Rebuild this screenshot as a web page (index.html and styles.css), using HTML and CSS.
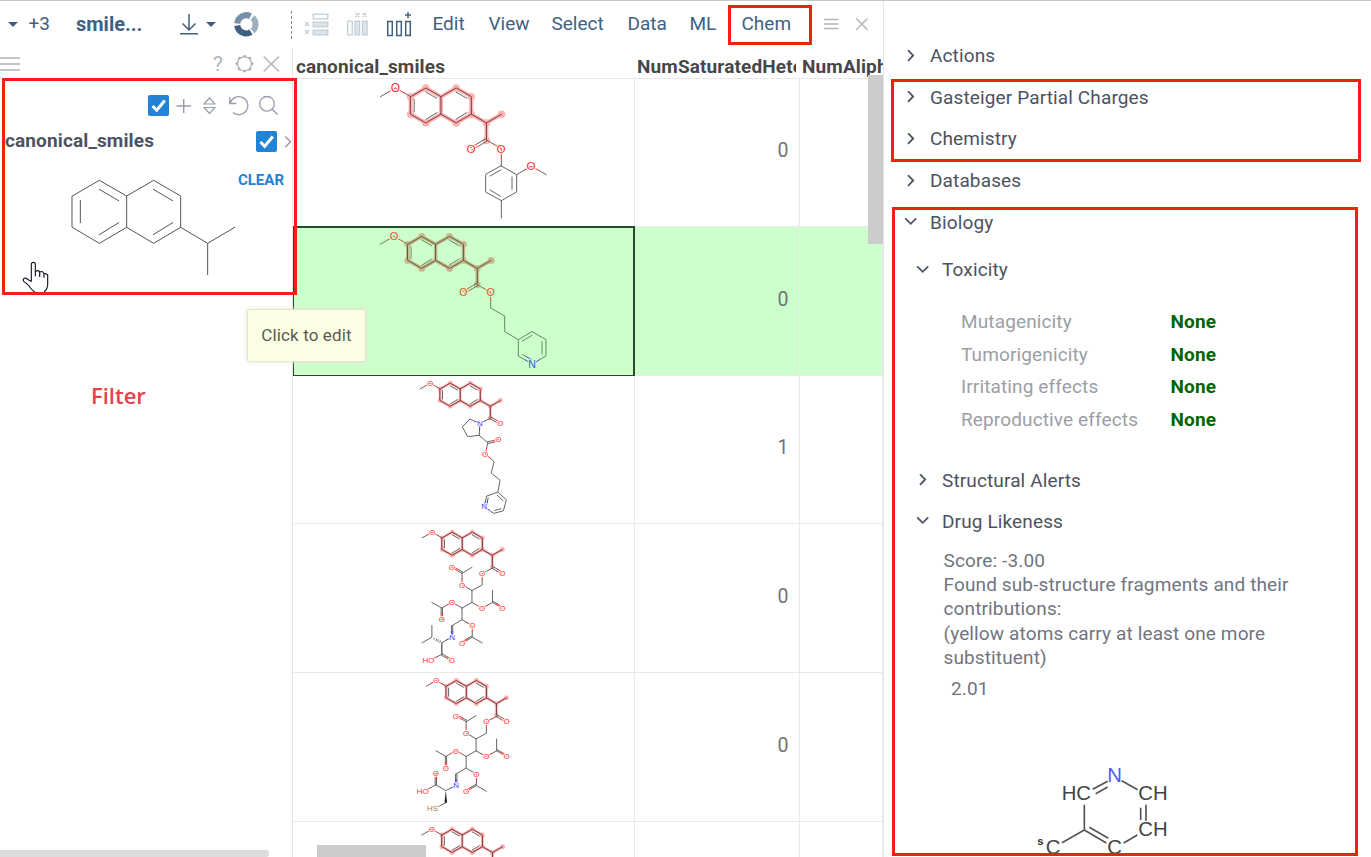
FILE: index.html
```html
<!DOCTYPE html>
<html lang="en">
<head>
<meta charset="utf-8">
<title>smiles</title>
<link rel="stylesheet" href="styles.css">
</head>
<body>
<svg class="defs" width="0" height="0" aria-hidden="true">
  <defs>
    <!-- naproxen skeleton, origin at the methoxy-bearing ring atom -->
    <g id="naproxen">
      <path class="hl" d="M0 0L30.3-17.5L60.6 0V35L30.3 52.5L0 35ZM60.6 0L91-17.5L121.3 0V35L91 52.5L60.6 35M121.3 35L151.5 52.5L181.8 35M151.5 52.5V87.5"/>
      <path class="dots" d="M0 0h0M30.3-17.5h0M0 35h0M30.3 52.5h0M91-17.5h0M121.3 0h0M91 52.5h0M181.8 35h0M151.5 87.5h0M151.5 52.5h0M121.3 35h0"/>
      <path class="b dark" d="M0 0L30.3-17.5L60.6 0V35L30.3 52.5L0 35ZM60.6 0L91-17.5L121.3 0V35L91 52.5L60.6 35M121.3 35L151.5 52.5L181.8 35M151.5 52.5V87.5"/>
      <path class="b" d="M7 6V30M31-9L52 3M31 45L53 32M91-9L112 3M91 45L112 32M-60.6 0L-45-9M0 0L-12-7"/>
      <path class="b o" d="M-45-9L-30.3-17.5L-12-7"/>
      <text class="t o" x="-30.3" y="-9.500">O</text>
    </g>
    <!-- acetylated sugar chain ending at the imine nitrogen -->
    <g id="sugar">
      <path class="b" d="M153 90L141 97M151 92L165 100M154 87L168 95M121 124V142L90 159M90 159L75 150M60 124V107M90 89L60 107M60 107L48 100M62 103L50 96M90 159V195M90 195L106 204M136 204L152 195M152 159V195M152 195L166 203M154 192L168 200M90 195L60 212M60 212L45 203M14 203L-1 212M-31 195L-1 212M-3 212V230M1 212V230M60 212V247L30 265M60 247L75 256M91 283V300L121 317M91 300L77 308M89 297L75 305M28 265V283M32 265V283"/>
      <path class="b o" d="M141 97L121 107V124M165 100L180 109M168 95L183 104M75 150L60 142V124M48 100L29 89M50 96L31 85M106 204L121 212L136 204M166 203L181 212M168 200L183 209M45 203L29 195L14 203M-3 230V247M1 230V247M75 256L91 265V283M77 308L61 317M75 305L59 314"/>
      <path class="b n" d="M28 283V300M32 283V300"/>
      <g class="t o"><text x="121" y="115.500">O</text><text x="182" y="115.500">O</text><text x="60" y="150">O</text><text x="29" y="98">O</text><text x="121" y="220.500">O</text><text x="182" y="220.500">O</text><text x="29" y="203.500">O</text><text x="-1" y="255.500">O</text><text x="91" y="273.500">O</text><text x="60" y="325.500">O</text></g>
      <text class="t n" x="30" y="308">N</text>
    </g>
    <g id="check">
      <rect width="21" height="21" rx="2" fill="#2083d5"/>
      <path d="M4.5 11L8.7 15.2L16.8 5.5" fill="none" stroke="#fff" stroke-width="3"/>
    </g>
  </defs>
</svg>

<main class="app">
  <section class="work">
    <header class="toolbar">
      <svg class="ic" width="21" height="10" viewBox="0 0 21 10"><path d="M8 2h10l-5 5z" fill="#41607f"/></svg>
      <span>+3</span>
      <b>smile...</b>
      <svg class="ic" width="18" height="24" viewBox="0 0 18 24"><path d="M9 1v16M2.500 10.500L9 17L15.500 10.500M0 20.700h18" fill="none" stroke="#41607f" stroke-width="1.500"/></svg>
      <svg class="ic" width="11" height="10" viewBox="0 0 11 10"><path d="M0 2h10l-5 5z" fill="#41607f"/></svg>
      <svg class="ic" width="25" height="26" viewBox="0 0 25 26"><g fill="none" stroke-width="6"><path d="M3.200 11.500A9.200 9.200 0 0 1 16.500 4.200" stroke="#7690aa"/><path d="M18.600 5.500A9.200 9.200 0 0 1 18.600 19" stroke="#9dafc1"/><path d="M3.200 13.500A9.200 9.200 0 0 0 17 20.100" stroke="#3f607f"/></g></svg>
      <i class="dash"></i>
      <svg class="ic" width="26" height="26" viewBox="0 0 26 26"><g fill="none" stroke="#c4ced7" stroke-width="1.300"><path d="M1 10l4 4m0-4l-4 4M1 18l4 4m0-4l-4 4"/><rect x="9.200" y="2.200" width="14.600" height="4.600"/><rect x="9.200" y="10.200" width="14.600" height="4.600" fill="#dfe4e9"/><rect x="9.200" y="18.200" width="14.600" height="4.600" fill="#dfe4e9"/></g></svg>
      <svg class="ic" width="22" height="26" viewBox="0 0 22 26"><g fill="none" stroke="#c4ced7" stroke-width="1.300"><path d="M8.500 1l4 4m0-4l-4 4M15.500 1l4 4m0-4l-4 4"/><rect x=".7" y="9.200" width="4.600" height="13.600"/><rect x="8" y="9.200" width="4.600" height="13.600" fill="#dfe4e9"/><rect x="15.500" y="9.200" width="4.600" height="13.600" fill="#dfe4e9"/></g></svg>
      <svg class="ic" width="27" height="26" viewBox="0 0 27 26"><g fill="none" stroke="#41607f" stroke-width="1.500"><path d="M19 3h6M22 0v6"/><rect x="1.700" y="9.500" width="4.600" height="14"/><rect x="10.700" y="9.500" width="4.600" height="14"/><rect x="19.700" y="9.500" width="4.600" height="14"/></g></svg>
      <span>Edit</span><span>View</span><span>Select</span><span>Data</span><span>ML</span><span>Chem</span>
      <svg class="ic" width="15" height="14" viewBox="0 0 15 14"><path d="M0 1.500h14.500M0 6h14.500M0 10.500h14.500" stroke="#b4b4b4" stroke-width="1.500"/></svg>
      <svg class="ic" width="13" height="14" viewBox="0 0 13 14"><path d="M.2.500L11.500 11.800M11.500.5L.2 11.800" stroke="#b4b4b4" stroke-width="1.500"/></svg>
    </header>

    <div class="columns">
      <aside class="side">
        <div class="side-head">
          <svg width="20" height="16" viewBox="0 0 20 16"><path d="M0 2h20M0 8h20M0 14h20" stroke="#b2b4bb" stroke-width="1.700"/></svg>
          <span>?</span>
          <svg width="20" height="20" viewBox="0 0 20 20"><path d="M9.500 1L12 3.500L15.600 3.300L15.800 6.900L18.300 9.700L15.800 12.500L15.600 16.100L12 16L9.500 18.500L7 16L3.400 16.100L3.200 12.500L.7 9.700L3.200 6.900L3.400 3.300L7 3.500Z" fill="#b2b4bb" stroke="#b2b4bb" stroke-linejoin="round"/><circle cx="9.500" cy="9.800" r="6.300" fill="#fff"/></svg>
          <svg width="17" height="18" viewBox="0 0 17 18"><path d="M.7 1.500L16 16.500M16 1.500L.7 16.500" stroke="#b2b4bb" stroke-width="1.500"/></svg>
        </div>
        <div class="tools">
          <svg width="21" height="21"><use href="#check"/></svg>
          <svg width="16" height="21" viewBox="0 0 16 21"><path d="M.5 11h14.500M7.700 4v14" stroke="#989da8" stroke-width="1.500"/></svg>
          <svg width="13" height="21" viewBox="0 0 13 21"><path d="M1 9L6.500 3L12 9ZM1 12.500h11L6.500 18.500Z" fill="none" stroke="#989da8" stroke-width="1.200"/></svg>
          <svg width="20" height="21" viewBox="0 0 20 21"><path d="M.8 2v6.500h6.500M1.200 8A9 9 0 1 1 4 17.500" fill="none" stroke="#989da8" stroke-width="1.300"/></svg>
          <svg width="20" height="21" viewBox="0 0 20 21"><path d="M13.300 14.200L18.500 19.500" stroke="#989da8" stroke-width="1.500"/><circle cx="8" cy="8.800" r="7.300" fill="none" stroke="#989da8" stroke-width="1.300"/></svg>
        </div>
        <div class="field">
          <b>canonical_smiles</b>
          <svg width="21" height="21"><use href="#check"/></svg>
          <svg width="7" height="13" viewBox="0 0 7 13"><path d="M.3 1.500L5.500 6.700L.3 12" fill="none" stroke="#989da8" stroke-width="1.500"/></svg>
        </div>
        <div class="sketch">
          <span class="clear">CLEAR</span>
          <svg width="292" height="132" viewBox="0 264 876 396">
            <path class="b" d="M217 363L298 316L380 363V457L298 505L217 457ZM380 363L461 316L542 363V457L461 505L380 457M542 457L623 505L704 457M623 505V599M241 376V443M298 343L356 377M298 479L356 443M460 343L518 377M460 479L518 443"/>
            <path class="hand" d="M94 619V568Q94 562 100 562Q106 562 106 568V592Q108 586 114 587Q119 588 119 593Q121 588 127 590Q132 592 132 597Q137 594 143 600V626Q143 642 134 648V654H108Q92 642 87 632L71 619Q68 613 73 610Q78 608 86 615ZM106 590V604M119 592V606M132 596V608"/>
          </svg>
        </div>
        <p class="note">Filter</p>
        <i class="side-scroll"></i>
      </aside>

      <section class="table">
        <div class="row head"><b>canonical_smiles</b><b>NumSaturatedHeterocycles</b><b>NumAliph</b></div>
        <div class="row">
          <div><svg class="mol" viewBox="-201 12 1023 441">
            <use href="#naproxen" transform="translate(152 65) scale(1.5)"/>
            <path class="b" d="M379 195L402 208M376 192L354 205M380 199L358 212M424 273V248M424 273L470 299V351L424 377L377 351V299ZM390 303L422 285M456 306V343M422 364L390 345M470 299L492 286M559 299L536 286M424 377V429"/>
            <path class="b o" d="M402 208L424 221V248M354 205L331 218M358 212L335 225M492 286L513 274L536 286"/>
            <g class="t o big"><text x="333" y="233">O</text><text x="423" y="233">O</text><text x="513" y="286">O</text></g>
          </svg></div><div>0</div><div></div>
        </div>
        <div class="row current">
          <div><svg class="mol" viewBox="-201 15 1023 444">
            <use href="#naproxen" transform="translate(143.500 67) scale(1.375)"/>
            <path class="b" d="M351 188L371 199M349 185L330 196M353 191L334 202M392 235V258L434 282V329L475 353L516 329L558 353V402L537 414M475 353V402L496 414M487 357L516 340M546 359V396M488 398L501 405"/>
            <path class="b o" d="M371 199L392 211V235M330 196L309 208M334 202L313 214"/>
            <path class="b n" d="M537 414L517 426L496 414M501 405L514 413"/>
            <g class="t o mid"><text x="310" y="222">O</text><text x="392" y="222">O</text></g><text class="t n mid" x="516" y="437">N</text>
          </svg></div><div>0</div><div></div>
        </div>
        <div class="row">
          <div><svg class="mol" viewBox="-321 3 1023 444">
            <use href="#naproxen" transform="translate(120 42)"/>
            <path class="b" d="M271 131L255 139M270 132L285 140M273 127L288 135M225 140L210 133L187 157L203 186L238 182L239 165M238 182L264 205L260 222M263 202L280 198M265 207L281 203M270 250L283 262L274 296L301 318L294 354L260 366L257 381M294 354L320 377L311 410L282 418L268 408M292 363L310 379M304 404L285 409M265 371L263 381"/>
            <path class="b n" d="M255 139L240 147L225 140M240 147L239 165M257 381L253 397L268 408M263 381L261 392"/>
            <path class="b o" d="M285 140L301 149M288 135L304 144M260 222L256 239L270 250M280 198L296 194M281 203L297 199"/>
            <g class="t o"><text x="302" y="155.500">O</text><text x="296" y="203.500">O</text><text x="256" y="247.500">O</text></g><g class="t n"><text x="240" y="155.500">N</text><text x="253" y="406">N</text></g>
          </svg></div><div>1</div><div></div>
        </div>
        <div class="row">
          <div><svg class="mol" viewBox="-321 3 1023 447">
            <use href="#naproxen" transform="translate(126 45)"/><use href="#sugar" transform="translate(126 45)"/>
            <path class="b" d="M140 353L125 362V397L106 406M95 310V345L65 362M125 362V397M124 399L139 408M126 395L141 404M119 361l2-5M113 358l2-5M107 355l2-4M101 351l2-3"/>
            <path class="b n" d="M155 345L140 353"/><path class="b o" d="M139 408L153 416M141 404L155 412M106 406L98 410"/>
            <text class="t n" x="156" y="353">N</text><g class="t o"><text x="155" y="423">O</text><text x="85" y="423">HO</text></g>
          </svg></div><div>0</div><div></div>
        </div>
        <div class="row">
          <div><svg class="mol" viewBox="-321 3 1023 447">
            <use href="#naproxen" transform="translate(138.500 43)"/><use href="#sugar" transform="translate(138.500 43)"/>
            <path class="b" d="M153 350L137 358L107 341L90 350M105 341V323M109 341V323M137 395L121 403"/>
            <path d="M137 358L133 395H141Z" fill="#222"/>
            <path class="b n" d="M168 343L153 350"/><path class="b o" d="M90 350L81 355M105 323V306M109 323V306"/><path class="b s" d="M121 403L110 409"/>
            <text class="t n" x="168" y="351">N</text><g class="t o"><text x="107" y="315">O</text><text x="67" y="369">HO</text></g><text class="t s" x="97" y="421">HS</text>
          </svg></div><div>0</div><div></div>
        </div>
        <div class="row last">
          <div><svg class="mol" viewBox="-321 450 1023 105">
            <use href="#naproxen" transform="translate(126 489)"/>
          </svg></div><div></div><div></div>
        </div>
        <i class="cell-focus"></i>
        <i class="scroll-v"></i>
        <i class="scroll-h"></i>
      </section>
    </div>
  </section>

  <section class="props">
    <div class="item"><svg class="chev"><use href="#right"/></svg>Actions</div>
    <div class="item"><svg class="chev"><use href="#right"/></svg>Gasteiger Partial Charges</div>
    <div class="item"><svg class="chev"><use href="#right"/></svg>Chemistry</div>
    <div class="item"><svg class="chev"><use href="#right"/></svg>Databases</div>
    <div class="item"><svg class="chev"><use href="#down"/></svg>Biology</div>
    <div class="sub toxicity"><svg class="chev"><use href="#down"/></svg>Toxicity</div>
    <dl>
      <dt>Mutagenicity</dt><dd>None</dd>
      <dt>Tumorigenicity</dt><dd>None</dd>
      <dt>Irritating effects</dt><dd>None</dd>
      <dt>Reproductive effects</dt><dd>None</dd>
    </dl>
    <div class="sub"><svg class="chev"><use href="#right"/></svg>Structural Alerts</div>
    <div class="sub"><svg class="chev"><use href="#down"/></svg>Drug Likeness</div>
    <p class="desc">Score: -3.00<br>Found sub-structure fragments and their<br>contributions:<br>(yellow atoms carry at least one more<br>substituent)</p>
    <p class="val">2.01</p>
    <svg class="frag" width="160" height="93" viewBox="420 300 480 279">
      <g fill="none" stroke="#555" stroke-width="5"><path d="M623 388L668 364M632 401L668 381M710 362L758 389M598 434V510L531 548M598 510L664 549M613 502L670 535M716 549L757 525M783 434V482M767 443V480"/></g>
      <g class="atoms"><text x="530" y="421">HC</text><text x="760" y="421">CH</text><text x="760" y="527">CH</text><text x="667" y="581">C</text><text x="482" y="581">C</text><text class="nitro" x="667" y="366">N</text><text class="iso" x="457" y="555">s</text></g>
    </svg>
    <svg class="defs" width="0" height="0"><defs>
      <path id="right" d="M4 .2L9.200 5.500L4 10.800" fill="none" stroke="#4d5565" stroke-width="1.800"/>
      <path id="down" d="M1.200 2.300L6.700 7.800L12.200 2.300" fill="none" stroke="#4d5565" stroke-width="1.800"/>
    </defs></svg>
  </section>

  <div class="tip">Click to edit</div>
  <i class="mark mark-filter"></i>
  <i class="mark mark-chem"></i>
  <i class="mark mark-panels"></i>
  <i class="mark mark-bio"></i>
</main>
</body>
</html>
```
FILE: styles.css
```css
* { box-sizing: border-box; }
body { margin: 0; font-family: Roboto, "Liberation Sans", sans-serif; font-size: 19px; letter-spacing: .13px; color: #4d5261; background: #fff; }
p, dl, dd { margin: 0; }
svg { display: block; flex: none; }
i { font-style: normal; }
b { font-weight: 700; }
.defs { position: absolute; }
.app { position: relative; display: flex; width: 1371px; height: 857px; overflow: hidden; border-top: 1px solid #c6c6c6; }
.work { width: 884px; border-right: 1px solid #e6e6e6; display: flex; flex-direction: column; }
.toolbar { display: grid; grid-template-columns: 29px 47px 104px 26px 28px 57px 13px 43px 39px 47px 56px 63px 76px 62px 52px 82px 32px 15px; height: 47px; align-items: center; color: #41607f; white-space: nowrap; letter-spacing: 0; }
.toolbar b { font-size: 20px; }
.toolbar span, .toolbar b { padding-bottom: 2px; }
.toolbar span { margin-left: -.5px; }
.dash { height: 28px; border-left: 1px dashed #888; }
.columns { display: flex; flex: 1; min-height: 0; }

.side { width: 293px; border-right: 1px solid #e6e6e6; display: flex; flex-direction: column; overflow: hidden; }
.side-head { display: grid; grid-template-columns: 213px 22px 28px 17px; align-items: center; height: 32px; color: #b2b4bb; font-size: 21px; }
.tools { display: grid; grid-template-columns: 28px 27px 26px 30px 20px; padding: 15px 0 0 148px; height: 51px; }
.field { display: grid; grid-template-columns: 251px 29px 7px; align-items: center; height: 21px; padding-left: 5px; }
.field b { line-height: 20px; padding-bottom: 3px; }
.field svg { margin-top: -2px; }
.sketch { position: relative; margin-top: 11px; }
.clear { position: absolute; right: 8px; top: 7px; font-size: 15px; font-weight: 700; line-height: 20px; color: #2083d5; letter-spacing: 0; }
.hand { fill: #fff; stroke: #171a2b; stroke-width: 3.5; stroke-linejoin: round; }
.note { margin: 84.500px 0 0 91px; font: 600 22px/30px "Open Sans", sans-serif; letter-spacing: 0; color: #e9404c; }
.side-scroll { width: 269px; height: 7px; margin-top: auto; background: #dcdcdc; border-radius: 0 3px 3px 0; }

.table { position: relative; width: 590px; overflow: hidden; display: grid; grid-template-rows: 31px 148px 149px 148px 149px 149px 35px; }
.row { display: grid; grid-template-columns: 342px 165px 83px; border-bottom: 1px solid #e9e9e9; --cell: #fff; --hl: #ffb2b2; --dark: #7a3c3e; --bond: #666; --o: #ff3030; --n: #3b3bff; }
.row > * { border-right: 1px solid #e9e9e9; overflow: hidden; }
.row > div:nth-child(2) { display: flex; align-items: center; justify-content: flex-end; padding: 0 10.500px 4px 0; color: #737373; font-size: 19.5px; letter-spacing: 0; }
.head > b { border: 0; padding: 7px 0 0 3px; line-height: 24px; color: #474747; white-space: nowrap; }
.head > b + b { padding-left: 2px; margin-right: 4px; }
.head > b:last-child { margin-right: 0; }
.current { background: #cfc; --cell: #cfc; --hl: #ccb690; --dark: #50643a; --bond: #5d8c5d; --o: #df572d; --n: #315fd9; }
.last { border: 0; }
.mol { width: 341px; height: 100%; }
.last .mol { height: 35px; }
.cell-focus { position: absolute; left: 0; top: 178px; width: 342px; height: 150px; border: 2px solid #2a4a2c; border-width: 2px 2px 1px 1px; }
.scroll-v { position: absolute; left: 575px; top: 27px; width: 15px; height: 169px; background: #ccc; }
.scroll-h { position: absolute; left: 24px; top: 797px; width: 109px; height: 12px; background: #ccc; }

.b { fill: none; stroke: var(--bond, #555); stroke-width: 1px; vector-effect: non-scaling-stroke; stroke-linecap: round; }
.dark { stroke: var(--dark); }
.hl { fill: none; stroke: var(--hl); stroke-width: 8; stroke-linejoin: round; stroke-linecap: round; }
.dots { fill: none; stroke: var(--hl); stroke-width: 15; stroke-linecap: round; }
.b.o { stroke: var(--o); }
.b.n { stroke: var(--n); }
.b.s { stroke: #a67d3b; }
.t { font-family: "Liberation Sans", Arial, sans-serif; font-size: 24px; letter-spacing: 0; text-anchor: middle; paint-order: stroke; stroke: var(--cell); stroke-width: 5; }
.t.big { font-size: 35px; }
.t.mid { font-size: 32px; }
.t.o { fill: var(--o); }
.t.n { fill: var(--n); }
.t.s { fill: #a67d3b; }

.props { width: 487px; padding-top: 34.200px; line-height: 24px; }
.chev { width: 13px; height: 13px; }
.item { display: flex; align-items: center; gap: 13px; height: 41.700px; padding-left: 20px; }
.sub { display: flex; align-items: center; gap: 13px; height: 41px; padding-left: 32px; }
.sub.toxicity { margin-top: 6px; }
dl { display: grid; grid-template-columns: 209.500px auto; grid-auto-rows: 32.600px; align-items: center; padding: 15px 0 24.300px 77px; color: #9b9ea6; }
dd { color: #006400; font-weight: 700; }
.desc { padding: 6.500px 0 0 59.500px; line-height: 24.300px; color: #71757f; }
.val { padding: 7px 0 0 67px; color: #71757f; }
.frag { margin: 59px 0 0 141px; }
.atoms { font-family: "Liberation Sans", Arial, sans-serif; font-size: 61px; letter-spacing: 0; fill: #444; }
.nitro { fill: #4a5cf5; }
.iso { font-size: 34px; font-weight: 700; fill: #333; }

.tip { position: absolute; left: 247px; top: 308px; width: 119px; height: 53px; display: flex; align-items: center; justify-content: center; background: #fdffe5; border: 1px solid #e4e5cc; border-radius: 2px; box-shadow: 0 0 5px #e4e5cc; color: #5a5a58; font-size: 17px; padding-bottom: 1px; }
.mark { position: absolute; border: 3px solid #f0210f; }
.mark-filter { left: 2px; top: 77px; width: 295px; height: 217px; }
.mark-chem { left: 728px; top: 4px; width: 84px; height: 40px; }
.mark-panels { left: 891px; top: 78px; width: 470px; height: 83px; }
.mark-bio { left: 892px; top: 206px; width: 466px; height: 649px; }
```
